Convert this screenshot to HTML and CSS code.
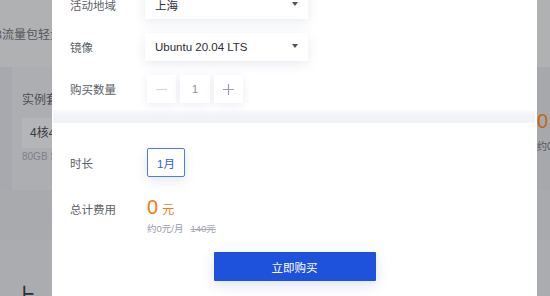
FILE: index.html
```html
<!DOCTYPE html>
<html lang="zh">
<head>
<meta charset="utf-8">
<link rel="stylesheet" href="styles.css">
</head>
<body>
<div class="page">
  <div class="page-head"><span class="head-text">B流量包轻量应用服务器</span></div>
  <div class="page-section">
    <div class="side-col"></div>
    <div class="panel">
      <div class="panel-title">实例套餐</div>
      <div class="plan-box">4核4G</div>
      <div class="plan-sub">80GB SSD</div>
    </div>
    <div class="right-col">
      <div class="right-price">0<span class="right-unit">元</span></div>
      <div class="right-sub">约0元/月</div>
    </div>
  </div>
  <div class="page-mid"></div>
  <div class="page-foot"><span class="foot-text">上云</span></div>
</div>

<div class="modal">
  <div class="modal-top">
    <div class="row">
      <div class="label">活动地域</div>
      <div class="select"><span>上海</span><i class="caret"></i></div>
    </div>
    <div class="row">
      <div class="label">镜像</div>
      <div class="select"><span>Ubuntu 20.04 LTS</span><i class="caret"></i></div>
    </div>
    <div class="row">
      <div class="label">购买数量</div>
      <div class="stepper">
        <div class="step-btn minus"><svg width="11" height="11" viewBox="0 0 11 11"><path d="M0 5.5h11" stroke="#d5d8de" stroke-width="1.2"/></svg></div>
        <div class="step-val">1</div>
        <div class="step-btn plus"><svg width="11" height="11" viewBox="0 0 11 11"><path d="M0 5.5h11M5.5 0v11" stroke="#9a9fab" stroke-width="1.2"/></svg></div>
      </div>
    </div>
  </div>
  <div class="band"></div>
  <div class="modal-bottom">
    <div class="row">
      <div class="label">时长</div>
      <div class="dur-btn">1月</div>
    </div>
    <div class="row total-row">
      <div class="label total-label">总计费用</div>
      <div class="price">
        <div class="price-main"><span class="price-num">0</span><span class="price-unit">元</span></div>
        <div class="price-sub"><span>约0元/月</span><s class="price-old">140元</s></div>
      </div>
    </div>
    <div class="actions">
      <button class="buy-btn">立即购买</button>
    </div>
  </div>
</div>
</body>
</html>
```

FILE: styles.css
```css
* { box-sizing: border-box; }
html, body { margin: 0; padding: 0; }
body {
  width: 550px;
  height: 296px;
  overflow: hidden;
  position: relative;
  font-family: "Liberation Sans", "Noto Sans CJK SC", sans-serif;
  background: #acadb0;
}

.page { width: 550px; height: 296px; display: flex; flex-direction: column; }
.page-head {
  height: 67px;
  background: #b0b1b3;
  display: flex;
  align-items: center;
  overflow: hidden;
}
.head-text {
  margin-left: -6px;
  font-size: 12px;
  color: #54565b;
  white-space: nowrap;
}
.page-section {
  height: 123px;
  display: flex;
  background: #adaeb1;
}
.side-col { width: 12px; background: #a7a9ae; }
.panel { flex: 1; padding: 27px 0 0 10px; overflow: hidden; }
.panel-title { font-size: 12px; color: #4c4e53; line-height: 12px; }
.plan-box {
  margin-top: 12px;
  width: 80px;
  height: 30px;
  background: #b4b5b8;
  font-size: 12px;
  color: #3a3c40;
  line-height: 30px;
  padding-left: 8px;
}
.plan-sub { margin-top: 4px; font-size: 10px; color: #7d808a; line-height: 10px; }
.right-col { width: 13px; background: #a6a8ac; padding-top: 44px; overflow: hidden; }
.right-price { font-size: 20px; color: #c5650f; line-height: 20px; white-space: nowrap; margin-left: 0px; }
.right-unit { font-size: 11px; margin-left: 2px; }
.right-sub { font-size: 10px; color: #55575c; white-space: nowrap; margin-top: 4px; }
.page-mid { height: 50px; background: #a9aaad; }
.page-foot { flex: 1; background: #abacaf; display: flex; align-items: flex-end; overflow: hidden; }
.foot-text { font-size: 22px; color: #2c2e33; line-height: 22px; margin-bottom: -12px; margin-left: 14px; letter-spacing: 20px; }

.modal {
  position: absolute;
  left: 52px;
  top: 0;
  width: 485px;
  height: 296px;
  background: #ffffff;
  overflow: hidden;
}
.modal-top {
  margin-top: -9px;
  padding-left: 18px;
  display: flex;
  flex-direction: column;
  gap: 14px;
}
.row { display: flex; align-items: center; }
.label { width: 75px; font-size: 11.5px; color: #5c5f66; }
.select {
  width: 163px;
  height: 28px;
  background: #fff;
  box-shadow: 0 3px 12px rgba(40, 60, 120, 0.10);
  display: flex;
  align-items: center;
  justify-content: space-between;
  padding: 0 10px 0 10px;
  font-size: 11.5px;
  color: #2b2e35;
}
.caret {
  width: 0; height: 0;
  border-left: 3.5px solid transparent;
  border-right: 3.5px solid transparent;
  border-top: 4px solid #4d5264;
  margin-top: -2px;
}
.stepper { display: flex; gap: 4px; margin-left: 2px; }
.step-btn, .step-val {
  width: 29px;
  height: 28px;
  background: #fff;
  box-shadow: 0 2px 10px rgba(40, 60, 120, 0.09);
  display: flex;
  align-items: center;
  justify-content: center;
}
.step-val { width: 30px; font-size: 11.5px; color: #8a8f9a; }
.band {
  margin-top: 7px;
  height: 13px;
  margin-right: 2px;
  margin-left: 1px;
  background: linear-gradient(#fafbfc, #f1f3f7 40%, #f1f3f7);
}
.modal-bottom { padding: 25px 0 0 18px; display: flex; flex-direction: column; }
.dur-btn {
  margin-left: 2px;
  width: 38px;
  height: 29px;
  border: 1px solid #5279e4;
  border-radius: 2px;
  color: #2f5ddc;
  font-size: 11.5px;
  display: flex;
  align-items: center;
  justify-content: center;
  box-shadow: 0 4px 12px rgba(40, 70, 160, 0.12);
}
.total-row { margin-top: 19px; align-items: flex-start; }
.total-label { line-height: 28px; }
.price { margin-left: 2px; }
.price-main { height: 22px; line-height: 22px; color: #f27a1a; white-space: nowrap; }
.price-num { font-size: 20px; }
.price-unit { font-size: 12px; margin-left: 4px; }
.price-sub { margin-top: 5px; font-size: 9.5px; color: #979ba6; line-height: 12px; display: flex; gap: 7px; }
.price-old { color: #a4a8b1; }
.actions { margin-top: 17px; display: flex; justify-content: center; padding-right: 18px; }
.buy-btn {
  width: 162px;
  height: 29px;
  border: none;
  border-radius: 1px;
  background: #1f52dc;
  color: #fff;
  font-family: "Liberation Sans", "Noto Sans CJK SC", sans-serif;
  font-size: 11.5px;
  box-shadow: 0 4px 14px rgba(30, 60, 160, 0.15);
  padding: 0;
}
```
